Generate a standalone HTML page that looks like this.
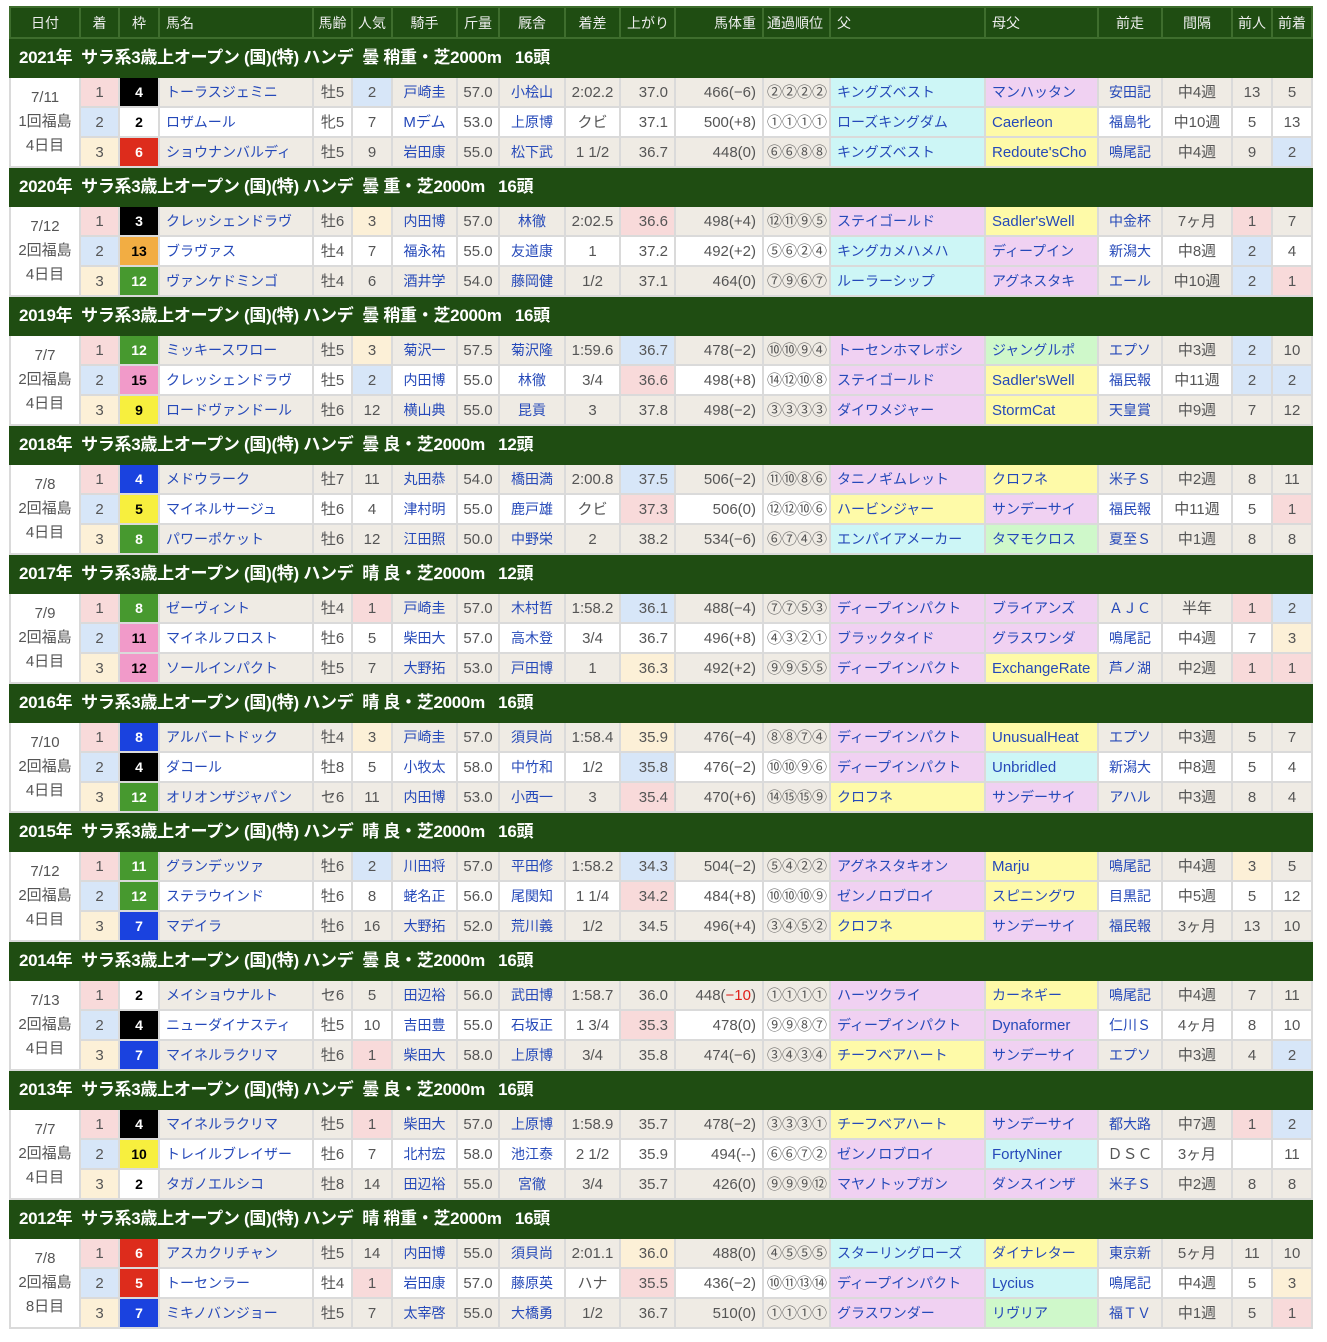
<!DOCTYPE html>
<html><head><meta charset="utf-8"><style>
body{margin:0;background:#fff;width:1327px;height:1342px;position:relative;overflow:hidden;font-family:"Liberation Sans","Noto Sans CJK JP",sans-serif;}
table{position:absolute;left:9px;top:6px;border-collapse:collapse;table-layout:fixed;width:1304px;font-size:15px;color:#555;}
td,th{padding:0;border:2px solid #dadada;text-align:center;white-space:nowrap;overflow:hidden;line-height:1;}
tr.h{height:31px}
th{background:#1f4d12;border-color:#3e6d2d;color:#eee;font-weight:normal;font-size:14px;}
tr.rh{height:39px}
tr.rh td{background:#1f4d12;border-color:#1f4d12;color:#fff;font-weight:bold;font-size:17px;letter-spacing:-0.3px;text-align:left;padding-left:8px;}
tr.d{height:30px}
tr.o td{background:#efebe4}
tr.e td{background:#fff}
td.dt{background:#fff!important;line-height:24px;color:#555}
.L{text-align:left;padding-left:6px}
.R{text-align:right;padding-right:6px}
a{color:#2549b9;text-decoration:none;font-size:14px}
a.en{font-size:15px}
tr td.p{background:#f8dada}
tr td.b{background:#d7e6f8}
tr td.c{background:#fcf0d7}
tr td.cy{background:#cdf6f6}
tr td.yl{background:#fefaa8}
tr td.mg{background:#f0d1f2}
tr td.gr{background:#cff8ca}
tr td.f{font-weight:bold;font-size:14px}
tr td.fw{background:#fff;color:#000}
tr td.fk{background:#000;color:#fff}
tr td.fr{background:#dd2c1c;color:#fff}
tr td.fb{background:#1a42df;color:#fff}
tr td.fy{background:#f7ef3e;color:#000}
tr td.fg{background:#47992f;color:#fff}
tr td.fo{background:#f2ad43;color:#000}
tr td.fp{background:#f19ac9;color:#000}
.red{color:#e0201a}
</style></head><body>
<table>
<colgroup><col style="width:70px"><col style="width:39px"><col style="width:40px"><col style="width:154px"><col style="width:39px"><col style="width:40px"><col style="width:65px"><col style="width:42px"><col style="width:66px"><col style="width:55px"><col style="width:55px"><col style="width:88px"><col style="width:67px"><col style="width:155px"><col style="width:113px"><col style="width:64px"><col style="width:70px"><col style="width:40px"><col style="width:40px"></colgroup>
<tr class="h"><th>日付</th><th>着</th><th>枠</th><th class="L">馬名</th><th>馬齢</th><th>人気</th><th>騎手</th><th>斤量</th><th>厩舎</th><th>着差</th><th class="L">上がり</th><th class="R">馬体重</th><th class="L" style="padding-left:3px">通過順位</th><th class="L">父</th><th class="L">母父</th><th>前走</th><th>間隔</th><th>前人</th><th>前着</th></tr>

<tr class="rh"><td colspan="19">2021年&nbsp; サラ系3歳上オープン (国)(特) ハンデ&nbsp; 曇 稍重・芝2000m&nbsp;&nbsp; 16頭</td></tr>
<tr class="d o"><td class="dt" rowspan="3">7/11<br>1回福島<br>4日目</td><td class="p">1</td><td class="f fk">4</td><td class="L"><a>トーラスジェミニ</a></td><td>牡5</td><td class="b">2</td><td><a>戸崎圭</a></td><td>57.0</td><td><a>小桧山</a></td><td>2:02.2</td><td class="R">37.0</td><td class="R">466(−6)</td><td class="L" style="padding-left:3px">②②②②</td><td class="L cy"><a>キングズベスト</a></td><td class="L mg"><a>マンハッタン</a></td><td><a>安田記</a></td><td>中4週</td><td>13</td><td>5</td></tr>
<tr class="d e"><td class="b">2</td><td class="f fw">2</td><td class="L"><a>ロザムール</a></td><td>牝5</td><td>7</td><td><a class="en">Mデム</a></td><td>53.0</td><td><a>上原博</a></td><td>クビ</td><td class="R">37.1</td><td class="R">500(+8)</td><td class="L" style="padding-left:3px">①①①①</td><td class="L cy"><a>ローズキングダム</a></td><td class="L yl"><a class="en">Caerleon</a></td><td><a>福島牝</a></td><td>中10週</td><td>5</td><td>13</td></tr>
<tr class="d o"><td class="c">3</td><td class="f fr">6</td><td class="L"><a>ショウナンバルディ</a></td><td>牡5</td><td>9</td><td><a>岩田康</a></td><td>55.0</td><td><a>松下武</a></td><td>1 1/2</td><td class="R">36.7</td><td class="R">448(0)</td><td class="L" style="padding-left:3px">⑥⑥⑧⑧</td><td class="L cy"><a>キングズベスト</a></td><td class="L yl"><a class="en">Redoute'sCho</a></td><td><a>鳴尾記</a></td><td>中4週</td><td>9</td><td class="b">2</td></tr>

<tr class="rh"><td colspan="19">2020年&nbsp; サラ系3歳上オープン (国)(特) ハンデ&nbsp; 曇 重・芝2000m&nbsp;&nbsp; 16頭</td></tr>
<tr class="d o"><td class="dt" rowspan="3">7/12<br>2回福島<br>4日目</td><td class="p">1</td><td class="f fk">3</td><td class="L"><a>クレッシェンドラヴ</a></td><td>牡6</td><td class="c">3</td><td><a>内田博</a></td><td>57.0</td><td><a>林徹</a></td><td>2:02.5</td><td class="R p">36.6</td><td class="R">498(+4)</td><td class="L" style="padding-left:3px">⑫⑪⑨⑤</td><td class="L mg"><a>ステイゴールド</a></td><td class="L yl"><a class="en">Sadler'sWell</a></td><td><a>中金杯</a></td><td>7ヶ月</td><td class="p">1</td><td>7</td></tr>
<tr class="d e"><td class="b">2</td><td class="f fo">13</td><td class="L"><a>ブラヴァス</a></td><td>牡4</td><td>7</td><td><a>福永祐</a></td><td>55.0</td><td><a>友道康</a></td><td>1</td><td class="R">37.2</td><td class="R">492(+2)</td><td class="L" style="padding-left:3px">⑤⑥②④</td><td class="L cy"><a>キングカメハメハ</a></td><td class="L mg"><a>ディープイン</a></td><td><a>新潟大</a></td><td>中8週</td><td class="b">2</td><td>4</td></tr>
<tr class="d o"><td class="c">3</td><td class="f fg">12</td><td class="L"><a>ヴァンケドミンゴ</a></td><td>牡4</td><td>6</td><td><a>酒井学</a></td><td>54.0</td><td><a>藤岡健</a></td><td>1/2</td><td class="R">37.1</td><td class="R">464(0)</td><td class="L" style="padding-left:3px">⑦⑨⑥⑦</td><td class="L cy"><a>ルーラーシップ</a></td><td class="L mg"><a>アグネスタキ</a></td><td><a>エール</a></td><td>中10週</td><td class="b">2</td><td class="p">1</td></tr>

<tr class="rh"><td colspan="19">2019年&nbsp; サラ系3歳上オープン (国)(特) ハンデ&nbsp; 曇 稍重・芝2000m&nbsp;&nbsp; 16頭</td></tr>
<tr class="d o"><td class="dt" rowspan="3">7/7<br>2回福島<br>4日目</td><td class="p">1</td><td class="f fg">12</td><td class="L"><a>ミッキースワロー</a></td><td>牡5</td><td class="c">3</td><td><a>菊沢一</a></td><td>57.5</td><td><a>菊沢隆</a></td><td>1:59.6</td><td class="R b">36.7</td><td class="R">478(−2)</td><td class="L" style="padding-left:3px">⑩⑩⑨④</td><td class="L mg"><a>トーセンホマレボシ</a></td><td class="L gr"><a>ジャングルポ</a></td><td><a>エプソ</a></td><td>中3週</td><td class="b">2</td><td>10</td></tr>
<tr class="d e"><td class="b">2</td><td class="f fp">15</td><td class="L"><a>クレッシェンドラヴ</a></td><td>牡5</td><td class="b">2</td><td><a>内田博</a></td><td>55.0</td><td><a>林徹</a></td><td>3/4</td><td class="R p">36.6</td><td class="R">498(+8)</td><td class="L" style="padding-left:3px">⑭⑫⑩⑧</td><td class="L mg"><a>ステイゴールド</a></td><td class="L yl"><a class="en">Sadler'sWell</a></td><td><a>福民報</a></td><td>中11週</td><td class="b">2</td><td class="b">2</td></tr>
<tr class="d o"><td class="c">3</td><td class="f fy">9</td><td class="L"><a>ロードヴァンドール</a></td><td>牡6</td><td>12</td><td><a>横山典</a></td><td>55.0</td><td><a>昆貢</a></td><td>3</td><td class="R">37.8</td><td class="R">498(−2)</td><td class="L" style="padding-left:3px">③③③③</td><td class="L mg"><a>ダイワメジャー</a></td><td class="L yl"><a class="en">StormCat</a></td><td><a>天皇賞</a></td><td>中9週</td><td>7</td><td>12</td></tr>

<tr class="rh"><td colspan="19">2018年&nbsp; サラ系3歳上オープン (国)(特) ハンデ&nbsp; 曇 良・芝2000m&nbsp;&nbsp; 12頭</td></tr>
<tr class="d o"><td class="dt" rowspan="3">7/8<br>2回福島<br>4日目</td><td class="p">1</td><td class="f fb">4</td><td class="L"><a>メドウラーク</a></td><td>牡7</td><td>11</td><td><a>丸田恭</a></td><td>54.0</td><td><a>橋田満</a></td><td>2:00.8</td><td class="R b">37.5</td><td class="R">506(−2)</td><td class="L" style="padding-left:3px">⑪⑩⑧⑥</td><td class="L mg"><a>タニノギムレット</a></td><td class="L yl"><a>クロフネ</a></td><td><a>米子Ｓ</a></td><td>中2週</td><td>8</td><td>11</td></tr>
<tr class="d e"><td class="b">2</td><td class="f fy">5</td><td class="L"><a>マイネルサージュ</a></td><td>牡6</td><td>4</td><td><a>津村明</a></td><td>55.0</td><td><a>鹿戸雄</a></td><td>クビ</td><td class="R p">37.3</td><td class="R">506(0)</td><td class="L" style="padding-left:3px">⑫⑫⑩⑥</td><td class="L yl"><a>ハービンジャー</a></td><td class="L mg"><a>サンデーサイ</a></td><td><a>福民報</a></td><td>中11週</td><td>5</td><td class="p">1</td></tr>
<tr class="d o"><td class="c">3</td><td class="f fg">8</td><td class="L"><a>パワーポケット</a></td><td>牡6</td><td>12</td><td><a>江田照</a></td><td>50.0</td><td><a>中野栄</a></td><td>2</td><td class="R">38.2</td><td class="R">534(−6)</td><td class="L" style="padding-left:3px">⑥⑦④③</td><td class="L cy"><a>エンパイアメーカー</a></td><td class="L gr"><a>タマモクロス</a></td><td><a>夏至Ｓ</a></td><td>中1週</td><td>8</td><td>8</td></tr>

<tr class="rh"><td colspan="19">2017年&nbsp; サラ系3歳上オープン (国)(特) ハンデ&nbsp; 晴 良・芝2000m&nbsp;&nbsp; 12頭</td></tr>
<tr class="d o"><td class="dt" rowspan="3">7/9<br>2回福島<br>4日目</td><td class="p">1</td><td class="f fg">8</td><td class="L"><a>ゼーヴィント</a></td><td>牡4</td><td class="p">1</td><td><a>戸崎圭</a></td><td>57.0</td><td><a>木村哲</a></td><td>1:58.2</td><td class="R b">36.1</td><td class="R">488(−4)</td><td class="L" style="padding-left:3px">⑦⑦⑤③</td><td class="L mg"><a>ディープインパクト</a></td><td class="L mg"><a>ブライアンズ</a></td><td><a>ＡＪＣ</a></td><td>半年</td><td class="p">1</td><td class="b">2</td></tr>
<tr class="d e"><td class="b">2</td><td class="f fp">11</td><td class="L"><a>マイネルフロスト</a></td><td>牡6</td><td>5</td><td><a>柴田大</a></td><td>57.0</td><td><a>高木登</a></td><td>3/4</td><td class="R">36.7</td><td class="R">496(+8)</td><td class="L" style="padding-left:3px">④③②①</td><td class="L mg"><a>ブラックタイド</a></td><td class="L mg"><a>グラスワンダ</a></td><td><a>鳴尾記</a></td><td>中4週</td><td>7</td><td class="c">3</td></tr>
<tr class="d o"><td class="c">3</td><td class="f fp">12</td><td class="L"><a>ソールインパクト</a></td><td>牡5</td><td>7</td><td><a>大野拓</a></td><td>53.0</td><td><a>戸田博</a></td><td>1</td><td class="R c">36.3</td><td class="R">492(+2)</td><td class="L" style="padding-left:3px">⑨⑨⑤⑤</td><td class="L mg"><a>ディープインパクト</a></td><td class="L yl"><a class="en">ExchangeRate</a></td><td><a>芦ノ湖</a></td><td>中2週</td><td class="p">1</td><td class="p">1</td></tr>

<tr class="rh"><td colspan="19">2016年&nbsp; サラ系3歳上オープン (国)(特) ハンデ&nbsp; 晴 良・芝2000m&nbsp;&nbsp; 16頭</td></tr>
<tr class="d o"><td class="dt" rowspan="3">7/10<br>2回福島<br>4日目</td><td class="p">1</td><td class="f fb">8</td><td class="L"><a>アルバートドック</a></td><td>牡4</td><td class="c">3</td><td><a>戸崎圭</a></td><td>57.0</td><td><a>須貝尚</a></td><td>1:58.4</td><td class="R c">35.9</td><td class="R">476(−4)</td><td class="L" style="padding-left:3px">⑧⑧⑦④</td><td class="L mg"><a>ディープインパクト</a></td><td class="L yl"><a class="en">UnusualHeat</a></td><td><a>エプソ</a></td><td>中3週</td><td>5</td><td>7</td></tr>
<tr class="d e"><td class="b">2</td><td class="f fk">4</td><td class="L"><a>ダコール</a></td><td>牡8</td><td>5</td><td><a>小牧太</a></td><td>58.0</td><td><a>中竹和</a></td><td>1/2</td><td class="R b">35.8</td><td class="R">476(−2)</td><td class="L" style="padding-left:3px">⑩⑩⑨⑥</td><td class="L mg"><a>ディープインパクト</a></td><td class="L cy"><a class="en">Unbridled</a></td><td><a>新潟大</a></td><td>中8週</td><td>5</td><td>4</td></tr>
<tr class="d o"><td class="c">3</td><td class="f fg">12</td><td class="L"><a>オリオンザジャパン</a></td><td>セ6</td><td>11</td><td><a>内田博</a></td><td>53.0</td><td><a>小西一</a></td><td>3</td><td class="R p">35.4</td><td class="R">470(+6)</td><td class="L" style="padding-left:3px">⑭⑮⑮⑨</td><td class="L yl"><a>クロフネ</a></td><td class="L mg"><a>サンデーサイ</a></td><td><a>アハル</a></td><td>中3週</td><td>8</td><td>4</td></tr>

<tr class="rh"><td colspan="19">2015年&nbsp; サラ系3歳上オープン (国)(特) ハンデ&nbsp; 晴 良・芝2000m&nbsp;&nbsp; 16頭</td></tr>
<tr class="d o"><td class="dt" rowspan="3">7/12<br>2回福島<br>4日目</td><td class="p">1</td><td class="f fg">11</td><td class="L"><a>グランデッツァ</a></td><td>牡6</td><td class="b">2</td><td><a>川田将</a></td><td>57.0</td><td><a>平田修</a></td><td>1:58.2</td><td class="R b">34.3</td><td class="R">504(−2)</td><td class="L" style="padding-left:3px">⑤④②②</td><td class="L mg"><a>アグネスタキオン</a></td><td class="L yl"><a class="en">Marju</a></td><td><a>鳴尾記</a></td><td>中4週</td><td class="c">3</td><td>5</td></tr>
<tr class="d e"><td class="b">2</td><td class="f fg">12</td><td class="L"><a>ステラウインド</a></td><td>牡6</td><td>8</td><td><a>蛯名正</a></td><td>56.0</td><td><a>尾関知</a></td><td>1 1/4</td><td class="R p">34.2</td><td class="R">484(+8)</td><td class="L" style="padding-left:3px">⑩⑩⑩⑨</td><td class="L mg"><a>ゼンノロブロイ</a></td><td class="L yl"><a>スピニングワ</a></td><td><a>目黒記</a></td><td>中5週</td><td>5</td><td>12</td></tr>
<tr class="d o"><td class="c">3</td><td class="f fb">7</td><td class="L"><a>マデイラ</a></td><td>牡6</td><td>16</td><td><a>大野拓</a></td><td>52.0</td><td><a>荒川義</a></td><td>1/2</td><td class="R">34.5</td><td class="R">496(+4)</td><td class="L" style="padding-left:3px">③④⑤②</td><td class="L yl"><a>クロフネ</a></td><td class="L mg"><a>サンデーサイ</a></td><td><a>福民報</a></td><td>3ヶ月</td><td>13</td><td>10</td></tr>

<tr class="rh"><td colspan="19">2014年&nbsp; サラ系3歳上オープン (国)(特) ハンデ&nbsp; 曇 良・芝2000m&nbsp;&nbsp; 16頭</td></tr>
<tr class="d o"><td class="dt" rowspan="3">7/13<br>2回福島<br>4日目</td><td class="p">1</td><td class="f fw">2</td><td class="L"><a>メイショウナルト</a></td><td>セ6</td><td>5</td><td><a>田辺裕</a></td><td>56.0</td><td><a>武田博</a></td><td>1:58.7</td><td class="R">36.0</td><td class="R">448(<span class="red">−10</span>)</td><td class="L" style="padding-left:3px">①①①①</td><td class="L mg"><a>ハーツクライ</a></td><td class="L yl"><a>カーネギー</a></td><td><a>鳴尾記</a></td><td>中4週</td><td>7</td><td>11</td></tr>
<tr class="d e"><td class="b">2</td><td class="f fk">4</td><td class="L"><a>ニューダイナスティ</a></td><td>牡5</td><td>10</td><td><a>吉田豊</a></td><td>55.0</td><td><a>石坂正</a></td><td>1 3/4</td><td class="R p">35.3</td><td class="R">478(0)</td><td class="L" style="padding-left:3px">⑨⑨⑧⑦</td><td class="L mg"><a>ディープインパクト</a></td><td class="L mg"><a class="en">Dynaformer</a></td><td><a>仁川Ｓ</a></td><td>4ヶ月</td><td>8</td><td>10</td></tr>
<tr class="d o"><td class="c">3</td><td class="f fb">7</td><td class="L"><a>マイネルラクリマ</a></td><td>牡6</td><td class="p">1</td><td><a>柴田大</a></td><td>58.0</td><td><a>上原博</a></td><td>3/4</td><td class="R">35.8</td><td class="R">474(−6)</td><td class="L" style="padding-left:3px">③④③④</td><td class="L yl"><a>チーフベアハート</a></td><td class="L mg"><a>サンデーサイ</a></td><td><a>エプソ</a></td><td>中3週</td><td>4</td><td class="b">2</td></tr>

<tr class="rh"><td colspan="19">2013年&nbsp; サラ系3歳上オープン (国)(特) ハンデ&nbsp; 曇 良・芝2000m&nbsp;&nbsp; 16頭</td></tr>
<tr class="d o"><td class="dt" rowspan="3">7/7<br>2回福島<br>4日目</td><td class="p">1</td><td class="f fk">4</td><td class="L"><a>マイネルラクリマ</a></td><td>牡5</td><td class="p">1</td><td><a>柴田大</a></td><td>57.0</td><td><a>上原博</a></td><td>1:58.9</td><td class="R">35.7</td><td class="R">478(−2)</td><td class="L" style="padding-left:3px">③③③①</td><td class="L yl"><a>チーフベアハート</a></td><td class="L mg"><a>サンデーサイ</a></td><td><a>都大路</a></td><td>中7週</td><td class="p">1</td><td class="b">2</td></tr>
<tr class="d e"><td class="b">2</td><td class="f fy">10</td><td class="L"><a>トレイルブレイザー</a></td><td>牡6</td><td>7</td><td><a>北村宏</a></td><td>58.0</td><td><a>池江泰</a></td><td>2 1/2</td><td class="R">35.9</td><td class="R">494(--)</td><td class="L" style="padding-left:3px">⑥⑥⑦②</td><td class="L mg"><a>ゼンノロブロイ</a></td><td class="L cy"><a class="en">FortyNiner</a></td><td>ＤＳＣ</td><td>3ヶ月</td><td></td><td>11</td></tr>
<tr class="d o"><td class="c">3</td><td class="f fw">2</td><td class="L"><a>タガノエルシコ</a></td><td>牡8</td><td>14</td><td><a>田辺裕</a></td><td>55.0</td><td><a>宮徹</a></td><td>3/4</td><td class="R">35.7</td><td class="R">426(0)</td><td class="L" style="padding-left:3px">⑨⑨⑨⑫</td><td class="L mg"><a>マヤノトップガン</a></td><td class="L mg"><a>ダンスインザ</a></td><td><a>米子Ｓ</a></td><td>中2週</td><td>8</td><td>8</td></tr>

<tr class="rh"><td colspan="19">2012年&nbsp; サラ系3歳上オープン (国)(特) ハンデ&nbsp; 晴 稍重・芝2000m&nbsp;&nbsp; 16頭</td></tr>
<tr class="d o"><td class="dt" rowspan="3">7/8<br>2回福島<br>8日目</td><td class="p">1</td><td class="f fr">6</td><td class="L"><a>アスカクリチャン</a></td><td>牡5</td><td>14</td><td><a>内田博</a></td><td>55.0</td><td><a>須貝尚</a></td><td>2:01.1</td><td class="R c">36.0</td><td class="R">488(0)</td><td class="L" style="padding-left:3px">④⑤⑤⑤</td><td class="L cy"><a>スターリングローズ</a></td><td class="L yl"><a>ダイナレター</a></td><td><a>東京新</a></td><td>5ヶ月</td><td>11</td><td>10</td></tr>
<tr class="d e"><td class="b">2</td><td class="f fr">5</td><td class="L"><a>トーセンラー</a></td><td>牡4</td><td class="p">1</td><td><a>岩田康</a></td><td>57.0</td><td><a>藤原英</a></td><td>ハナ</td><td class="R p">35.5</td><td class="R">436(−2)</td><td class="L" style="padding-left:3px">⑩⑪⑬⑭</td><td class="L mg"><a>ディープインパクト</a></td><td class="L cy"><a class="en">Lycius</a></td><td><a>鳴尾記</a></td><td>中4週</td><td>5</td><td class="c">3</td></tr>
<tr class="d o"><td class="c">3</td><td class="f fb">7</td><td class="L"><a>ミキノバンジョー</a></td><td>牡5</td><td>7</td><td><a>太宰啓</a></td><td>55.0</td><td><a>大橋勇</a></td><td>1/2</td><td class="R">36.7</td><td class="R">510(0)</td><td class="L" style="padding-left:3px">①①①①</td><td class="L mg"><a>グラスワンダー</a></td><td class="L gr"><a>リヴリア</a></td><td><a>福ＴＶ</a></td><td>中1週</td><td>5</td><td class="p">1</td></tr>
</table>
</body></html>
